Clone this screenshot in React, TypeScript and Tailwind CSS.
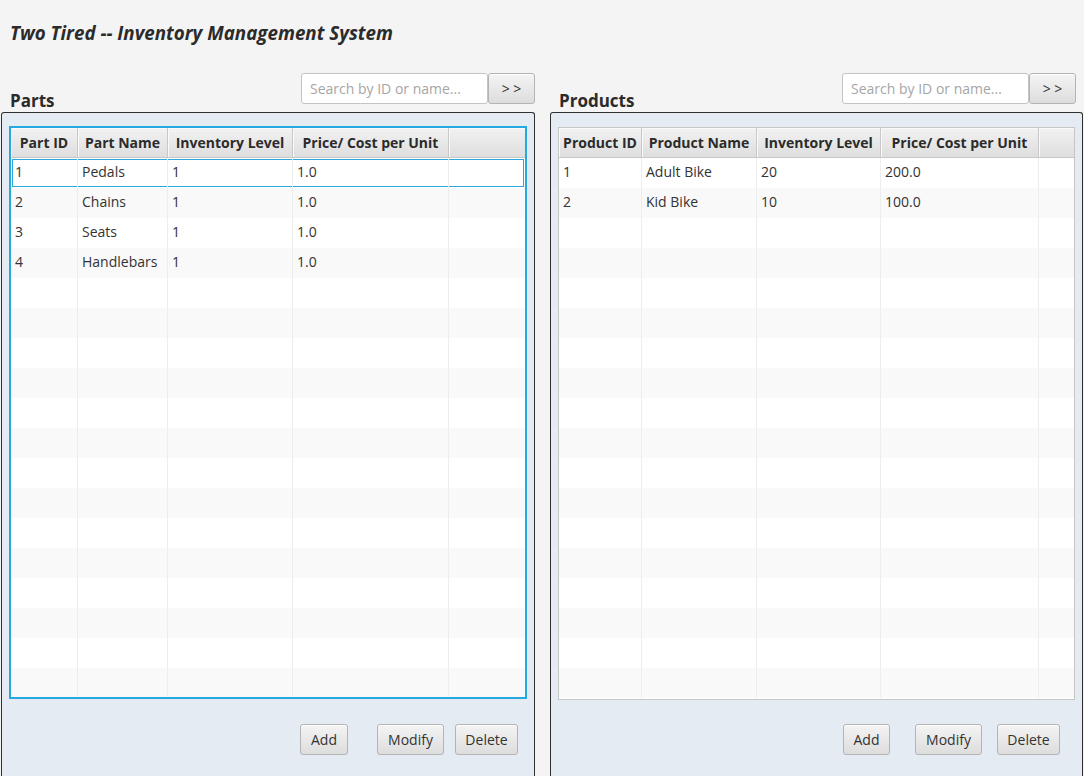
import React from "react";

type Col = { label: string; w: number };

const partCols: Col[] = [
  { label: "Part ID", w: 67 },
  { label: "Part Name", w: 90 },
  { label: "Inventory Level", w: 125 },
  { label: "Price/ Cost per Unit", w: 156 },
];
const prodCols: Col[] = [
  { label: "Product ID", w: 83 },
  { label: "Product Name", w: 115 },
  { label: "Inventory Level", w: 124 },
  { label: "Price/ Cost per Unit", w: 158 },
];

const parts = [
  ["1", "Pedals", "1", "1.0"],
  ["2", "Chains", "1", "1.0"],
  ["3", "Seats", "1", "1.0"],
  ["4", "Handlebars", "1", "1.0"],
];
const products = [
  ["1", "Adult Bike", "20", "200.0"],
  ["2", "Kid Bike", "10", "100.0"],
];

const FONT = { fontFamily: '"Open Sans", "Noto Sans", sans-serif' };

function Table({
  cols,
  rows,
  focused,
}: {
  cols: Col[];
  rows: string[][];
  focused: boolean;
}) {
  const total = 18;
  return (
    <div
      className={
        "flex flex-col h-[573px] overflow-hidden bg-white " +
        (focused ? "border-2 border-[#27a8df] -mt-[1px]" : "border border-[#c6c6c6]")
      }
    >
      <div className="flex h-[30px] shrink-0">
        {cols.map((c) => (
          <div
            key={c.label}
            style={{ width: c.w }}
            className="shrink-0 flex items-center justify-center border-r border-b border-[#c8c8c8] bg-gradient-to-b from-[#f2f2f2] to-[#dedede] text-[14px] font-bold text-[#2b2b2b] whitespace-nowrap shadow-[inset_1px_1px_0_#fafafa]"
          >
            {c.label}
          </div>
        ))}
        <div className="flex-1 border-b border-[#c8c8c8] bg-gradient-to-b from-[#f2f2f2] to-[#dedede] shadow-[inset_1px_1px_0_#fafafa]" />
      </div>
      {Array.from({ length: total }).map((_, i) => {
        const r = rows[i];
        const sel = focused && i === 0;
        return (
          <div
            key={i}
            className={
              "flex h-[30px] shrink-0 " +
              (i % 2 === 0 ? "bg-white" : "bg-[#f9f9f9]") +
              (sel ? " shadow-[inset_0_0_0_1px_#ffffff,inset_0_0_0_2px_#2aa7dd]" : "")
            }
          >
            {cols.map((c, j) => (
              <div
                key={j}
                style={{ width: c.w }}
                className="shrink-0 flex items-center pl-[4px] pb-[3px] border-r border-[#ededed] text-[14px] text-[#333] whitespace-nowrap"
              >
                {r ? r[j] : ""}
              </div>
            ))}
            <div className="flex-1" />
          </div>
        );
      })}
    </div>
  );
}

function Btn({ children, w }: { children: React.ReactNode; w: number }) {
  return (
    <button
      style={{ width: w }}
      className="h-[31px] rounded-[3px] border border-[#b4b4b4] bg-gradient-to-b from-[#f4f4f4] to-[#dddddd] text-[14px] text-[#333] shadow-[inset_0_1px_0_#ffffff]"
    >
      {children}
    </button>
  );
}

function Search() {
  return (
    <div className="flex">
      <div className="w-[187px] h-[31px] rounded-[3px] border border-[#c4c4c4] bg-white flex items-center pl-[8px] text-[14px] text-[#a6a6a6]">
        Search by ID or name...
      </div>
      <Btn w={47}>{"> >"}</Btn>
    </div>
  );
}

function Section({
  title,
  cols,
  rows,
  focused,
  width,
  searchPad,
  buttons,
}: {
  title: string;
  cols: Col[];
  rows: string[][];
  focused: boolean;
  width: number;
  searchPad: string;
  buttons: React.ReactNode;
}) {
  return (
    <div style={{ width }} className="flex flex-col shrink-0">
      <div className="flex items-end justify-between h-[47px]">
        <div className="pl-[9px] text-[17px] font-bold text-[#2b2b2b] leading-none pb-[3px]">
          {title}
        </div>
        <div className={"pb-[8px] " + searchPad}>
          <Search />
        </div>
      </div>
      <div className="flex-1 border border-[#2f2f2f] border-b-0 rounded-t-[3px] bg-[#e4ebf3] pt-[14px] px-[7px]">
        <Table cols={cols} rows={rows} focused={focused} />
        <div className="flex mt-[24px]">{buttons}</div>
      </div>
    </div>
  );
}

export default function App() {
  return (
    <div
      style={FONT}
      className="w-[1084px] h-[776px] bg-[#f4f4f4] overflow-hidden flex flex-col"
    >
      <div className="h-[65px] shrink-0 pl-[10px] pt-[19px] text-[18.75px] font-bold italic text-[#2b2b2b]">
        Two Tired -- Inventory Management System
      </div>
      <div className="flex flex-1 pl-[1px]">
        <Section
          title="Parts"
          cols={partCols}
          rows={parts}
          focused
          width={534}
          searchPad="pr-0"
          buttons={
            <div className="flex pl-[291px] mt-[1px]">
              <Btn w={48}>Add</Btn>
              <div className="ml-[29px]">
                <Btn w={67}>Modify</Btn>
              </div>
              <div className="ml-[11px]">
                <Btn w={63}>Delete</Btn>
              </div>
            </div>
          }
        />
        <div className="w-[15px] shrink-0" />
        <Section
          title="Products"
          cols={prodCols}
          rows={products}
          focused={false}
          width={533}
          searchPad="pr-[7px]"
          buttons={
            <div className="flex pl-[285px]">
              <Btn w={47}>Add</Btn>
              <div className="ml-[25px]">
                <Btn w={67}>Modify</Btn>
              </div>
              <div className="ml-[15px]">
                <Btn w={63}>Delete</Btn>
              </div>
            </div>
          }
        />
      </div>
    </div>
  );
}
